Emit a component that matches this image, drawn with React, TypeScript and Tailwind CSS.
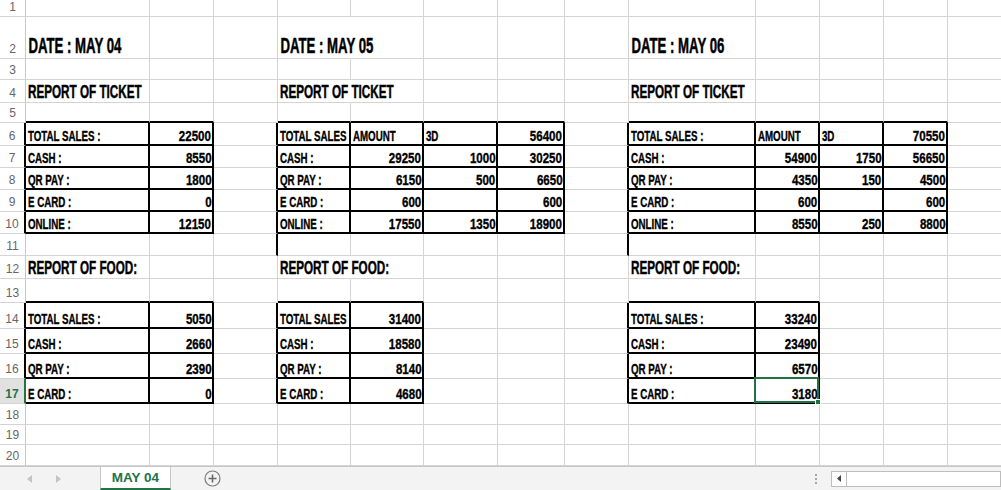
import React from "react";

type Kind = "date" | "head" | "label" | "num";
type Cell = { t: string; k: Kind };

const data: Record<string, Cell> = {};
function put(r: number, c: number, t: string | number, k?: Kind) {
  const kind: Kind = k ?? (typeof t === "number" ? "num" : "label");
  data[`${r}-${c}`] = { t: String(t), k: kind };
}

// columns: 1=A ... 13=M
[1, 4, 9].forEach((c, i) => put(2, c, `DATE : MAY 0${4 + i}`, "date"));
[1, 4, 9].forEach((c) => put(4, c, "REPORT OF TICKET", "head"));
[1, 4, 9].forEach((c) => put(12, c, "REPORT OF FOOD:", "head"));

const ticket1: [string, number][] = [
  ["TOTAL SALES :", 22500],
  ["CASH :", 8550],
  ["QR PAY :", 1800],
  ["E CARD :", 0],
  ["ONLINE :", 12150],
];
ticket1.forEach(([l, v], i) => {
  put(6 + i, 1, l);
  put(6 + i, 2, v);
});

const ticket2: [string, string | number, string | number, number][] = [
  ["TOTAL SALES", "AMOUNT", "3D", 56400],
  ["CASH :", 29250, 1000, 30250],
  ["QR PAY :", 6150, 500, 6650],
  ["E CARD :", 600, "", 600],
  ["ONLINE :", 17550, 1350, 18900],
];
ticket2.forEach(([l, a, b, t], i) => {
  put(6 + i, 4, l);
  if (a !== "") put(6 + i, 5, a);
  if (b !== "") put(6 + i, 6, b);
  put(6 + i, 7, t);
});

const ticket3: [string, string | number, string | number, number][] = [
  ["TOTAL SALES :", "AMOUNT", "3D", 70550],
  ["CASH :", 54900, 1750, 56650],
  ["QR PAY :", 4350, 150, 4500],
  ["E CARD :", 600, "", 600],
  ["ONLINE :", 8550, 250, 8800],
];
ticket3.forEach(([l, a, b, t], i) => {
  put(6 + i, 9, l);
  if (a !== "") put(6 + i, 10, a);
  if (b !== "") put(6 + i, 11, b);
  put(6 + i, 12, t);
});

const food: [string, number, string, number, string, number][] = [
  ["TOTAL SALES :", 5050, "TOTAL SALES", 31400, "TOTAL SALES :", 33240],
  ["CASH :", 2660, "CASH :", 18580, "CASH :", 23490],
  ["QR PAY :", 2390, "QR PAY :", 8140, "QR PAY :", 6570],
  ["E CARD :", 0, "E CARD :", 4680, "E CARD :", 3180],
];
food.forEach(([a, b, c, d, e, f], i) => {
  put(14 + i, 1, a);
  put(14 + i, 2, b);
  put(14 + i, 4, c);
  put(14 + i, 5, d);
  put(14 + i, 9, e);
  put(14 + i, 10, f);
});

const tables = [
  [6, 10, 1, 2],
  [6, 10, 4, 7],
  [6, 10, 9, 12],
  [14, 17, 1, 2],
  [14, 17, 4, 5],
  [14, 17, 9, 10],
];
const inTable = (r: number, c: number) =>
  tables.some(([r1, r2, c1, c2]) => r >= r1 && r <= r2 && c >= c1 && c <= c2);

const noRightLine = new Set(["2-4", "4-4", "12-4"]);
const extraThickRight = new Set(["11-3", "11-8"]);

function Content({ cell }: { cell: Cell }) {
  if (cell.k === "date")
    return (
      <span className="mb-[1px] inline-block origin-left scale-x-[0.6] whitespace-nowrap pl-[4px] text-[22px] leading-none font-bold [-webkit-text-stroke:0.5px_black]">
        {cell.t}
      </span>
    );
  if (cell.k === "head")
    return (
      <span className="mb-[1px] inline-block origin-left scale-x-[0.65] whitespace-nowrap pl-[3px] text-[18px] leading-none font-bold [-webkit-text-stroke:0.45px_black]">
        {cell.t}
      </span>
    );
  if (cell.k === "label")
    return (
      <span className="mb-[1px] inline-block origin-left scale-x-[0.65] whitespace-nowrap pl-[3px] text-[15px] leading-none font-bold [-webkit-text-stroke:0.35px_black]">
        {cell.t}
      </span>
    );
  return (
    <span className="mb-[1px] inline-block origin-right scale-x-[0.77] whitespace-nowrap pr-[1px] text-[15px] leading-none font-bold [-webkit-text-stroke:0.35px_black]">
      {cell.t}
    </span>
  );
}

function GridCell({ r, c }: { r: number; c: number }) {
  const key = `${r}-${c}`;
  const cell = data[key];
  const rightThick = inTable(r, c) || inTable(r, c + 1) || extraThickRight.has(key);
  const bottomThick = inTable(r, c) || inTable(r + 1, c);
  const rightCls =
    c === 13
      ? "border-r-0"
      : rightThick
      ? "border-r-2 border-r-black"
      : noRightLine.has(key)
      ? "border-r border-r-transparent"
      : "border-r border-r-[#d4d4d4]";
  const bottomCls = bottomThick ? "border-b-2 border-b-black" : "border-b border-b-[#d4d4d4]";
  const justify = cell && cell.k === "num" ? "justify-end" : "justify-start";
  const active = r === 17 && c === 10;
  return (
    <div className={`flex items-end ${justify} ${rightCls} ${bottomCls} ${active ? "relative" : ""}`}>
      {cell && <Content cell={cell} />}
      {active && (
        <div className="absolute -left-[2px] -top-[2px] -right-[1px] -bottom-[1px] z-10 border-2 border-[#217346]">
          <div className="absolute -right-[4px] -bottom-[4px] h-[6px] w-[6px] border border-white bg-[#217346]" />
        </div>
      )}
    </div>
  );
}

function RowHeader({ r }: { r: number }) {
  const active = r === 17;
  const thick = inTable(r, 1);
  const rightCls = active
    ? "border-r-2 border-r-[#217346]"
    : thick
    ? "border-r-2 border-r-black"
    : "border-r border-r-[#c8c8c8]";
  return (
    <div
      className={`flex items-end justify-center border-b border-b-[#d4d4d4] pb-[3px] font-['Liberation_Sans',sans-serif] text-[12px] leading-none ${rightCls} ${
        active ? "bg-[#e1e1e1] font-bold text-[#217346]" : "text-[#666666]"
      }`}
    >
      {r}
    </div>
  );
}

export default function App() {
  const rows = Array.from({ length: 20 }, (_, i) => i + 1);
  const cols = Array.from({ length: 13 }, (_, i) => i + 1);
  return (
    <div className="flex h-[490px] w-[1001px] flex-col overflow-hidden bg-white text-black">
      <div className="grid h-[466px] grid-cols-[26px_124px_64px_64px_73px_73px_74px_67px_64px_127px_64px_64px_64px_53px] grid-rows-[17px_42px_21px_23px_20px_23px_22px_22px_22px_22px_22px_23px_24px_26px_25px_25px_25px_21px_20px_21px] font-['Liberation_Sans',sans-serif]">
        {rows.map((r) => (
          <React.Fragment key={r}>
            <RowHeader r={r} />
            {cols.map((c) => (
              <GridCell key={c} r={r} c={c} />
            ))}
          </React.Fragment>
        ))}
      </div>
      <div className="flex h-[24px] items-stretch border-t border-t-[#c6c6c6] bg-[#f3f3f3] font-['Liberation_Sans',sans-serif]">
        <div className="flex w-[100px] items-center gap-[24px] pl-[27px]">
          <svg width="5" height="8" viewBox="0 0 5 8">
            <path d="M5 0 L0 4 L5 8 Z" fill="#c4c4c4" />
          </svg>
          <svg width="5" height="8" viewBox="0 0 5 8">
            <path d="M0 0 L5 4 L0 8 Z" fill="#c4c4c4" />
          </svg>
        </div>
        <div className="flex w-[71px] items-center justify-center border-x border-x-[#c6c6c6] border-b-2 border-b-[#217346] bg-white pt-[1px] text-[13.5px] font-bold text-[#217346]">
          MAY 04
        </div>
        <div className="flex items-center pl-[33px]">
          <svg width="17" height="17" viewBox="0 0 17 17">
            <circle cx="8.5" cy="8.5" r="7.5" fill="none" stroke="#7a7a7a" strokeWidth="1.2" />
            <path d="M8.5 4.5 V12.5 M4.5 8.5 H12.5" stroke="#6a6a6a" strokeWidth="1.6" />
          </svg>
        </div>
        <div className="flex-1" />
        <div className="flex flex-col items-center justify-center gap-[2px] pr-[14px]">
          <div className="h-[2px] w-[2px] bg-[#a6a6a6]" />
          <div className="h-[2px] w-[2px] bg-[#a6a6a6]" />
          <div className="h-[2px] w-[2px] bg-[#a6a6a6]" />
        </div>
        <div className="flex items-center">
          <div className="flex h-[16px] w-[170px] border border-[#bdbdbd] bg-white">
            <div className="flex w-[15px] items-center justify-center border-r border-r-[#bdbdbd]">
              <svg width="4" height="7" viewBox="0 0 4 7">
                <path d="M4 0 L0 3.5 L4 7 Z" fill="#444" />
              </svg>
            </div>
          </div>
        </div>
      </div>
    </div>
  );
}
